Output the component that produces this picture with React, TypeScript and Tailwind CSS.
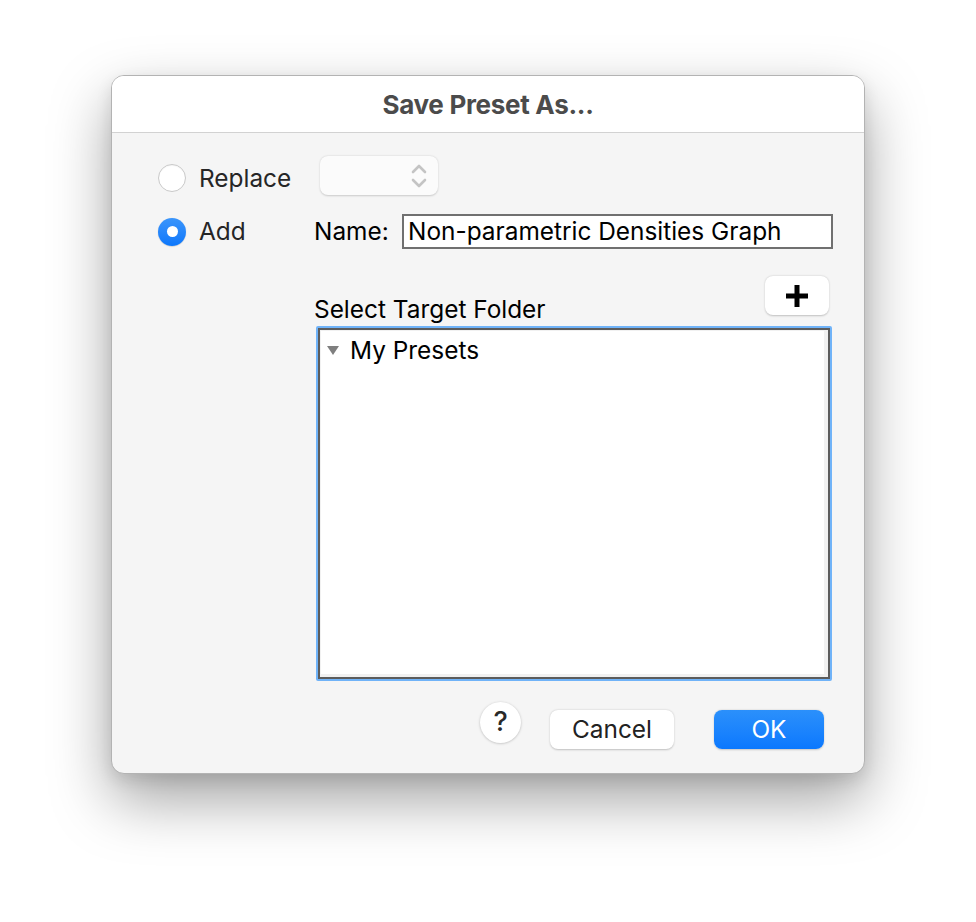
import React from "react";

const font = { fontFamily: "Inter, 'Liberation Sans', sans-serif" };

function Radio({ checked }: { checked?: boolean }) {
  if (checked) {
    return (
      <div className="w-[28px] h-[28px] rounded-full bg-gradient-to-b from-[#3a95fb] to-[#0a77fb] flex items-center justify-center shadow-[0_0.5px_1px_rgba(0,0,0,0.25)]">
        <div className="w-[11px] h-[11px] rounded-full bg-white" />
      </div>
    );
  }
  return (
    <div className="w-[28px] h-[28px] rounded-full bg-white border border-[#c9c9c9] shadow-[inset_0_1px_1px_rgba(0,0,0,0.04)]" />
  );
}

export default function App() {
  return (
    <div className="min-h-[922px] bg-white pt-[75px] pl-[111px]" style={font}>
      <div className="w-[754px] rounded-[13px] border border-[#b3b3b3] bg-[#f5f5f5] overflow-hidden shadow-[0_26px_60px_rgba(0,0,0,0.36),0_6px_16px_rgba(0,0,0,0.1)]">
        {/* title bar */}
        <div className="h-[57px] bg-white border-b border-[#d2d2d2] flex items-center justify-center">
          <span className="text-[26px] font-bold text-[#4b4b4b] tracking-[-0.3px]">Save Preset As...</span>
        </div>

        <div className="flex flex-col pl-[46px] pr-[30px] pb-[24px] text-[24.4px] text-black">
          {/* Replace row */}
          <div className="flex items-center mt-[23px] h-[39px]">
            <div className="w-[156px] flex items-center gap-[13px] pt-[5px]">
              <Radio />
              <span className="text-[#262626]">Replace</span>
            </div>
            <div className="ml-[6px] w-[118px] h-[39px] rounded-[8px] bg-[#fbfbfb] shadow-[0_0.5px_2px_rgba(0,0,0,0.18)] flex items-center justify-end pr-[10px]">
              <svg width="18" height="26" viewBox="0 0 18 26" fill="none" stroke="#c4c4c4" strokeWidth="2.6" strokeLinecap="round" strokeLinejoin="round">
                <path d="M3 9 L9 3 L15 9" />
                <path d="M3 17 L9 23 L15 17" />
              </svg>
            </div>
          </div>

          {/* Add row */}
          <div className="flex items-center mt-[19px] h-[35px]">
            <div className="w-[156px] flex items-center gap-[13px]">
              <Radio checked />
              <span className="text-[#262626]">Add</span>
            </div>
            <span className="w-[88px]">Name:</span>
            <div className="w-[431px] h-[35px] border-2 border-[#707070] bg-white flex items-center pl-[4px] leading-none">
              Non-parametric Densities Graph
            </div>
          </div>

          {/* target folder */}
          <div className="ml-[156px] flex flex-col">
            <div className="flex items-start justify-between mt-[27px]">
              <span className="mt-[19px] leading-[29px]">Select Target Folder</span>
              <button className="mr-[5px] w-[64px] h-[39px] rounded-[8px] bg-white shadow-[0_0.5px_2px_rgba(0,0,0,0.22)] flex items-center justify-center">
                <svg width="22" height="22" viewBox="0 0 22 22">
                  <rect x="8.5" y="0" width="5" height="22" fill="#000" />
                  <rect x="0" y="8.5" width="22" height="5" fill="#000" />
                </svg>
              </button>
            </div>

            <div className="ml-[2px] mt-[2px] w-[516px] h-[355px] border-[2px] border-[#70b3f8] rounded-[2px]">
              <div className="w-full h-full border-2 border-[#5c5c5c] bg-[#f1f1f1] pt-[1px] pl-[1px] pr-[4px] pb-[3px]">
                <div className="w-full h-full bg-white pl-[6px] pt-[5px]">
                  <div className="flex items-center gap-[11px] leading-[29px]">
                    <svg width="12" height="9" viewBox="0 0 12 9">
                      <path d="M0 0 H12 L6 9 Z" fill="#7f7f7f" />
                    </svg>
                    <span>My Presets</span>
                  </div>
                </div>
              </div>
            </div>

            {/* buttons */}
            <div className="flex items-center justify-end mt-[21px] mr-[10px] h-[47px]">
              <button className="w-[41px] h-[41px] rounded-full bg-white shadow-[0_0.5px_2.5px_rgba(0,0,0,0.25)] flex items-center justify-center text-[27px] font-medium text-[#2a2a2a] -mt-[7px]">
                ?
              </button>
              <button className="ml-[29px] w-[124px] h-[39px] mt-[8px] rounded-[8px] bg-white shadow-[0_0.5px_2px_rgba(0,0,0,0.22)] text-[24.4px] text-[#222]">
                Cancel
              </button>
              <button className="ml-[40px] w-[110px] h-[39px] mt-[8px] rounded-[8px] bg-gradient-to-b from-[#2b90fb] to-[#0a78fe] shadow-[0_0.5px_2px_rgba(0,0,0,0.2)] text-[24.4px] text-white">
                OK
              </button>
            </div>
          </div>
        </div>
      </div>
    </div>
  );
}
